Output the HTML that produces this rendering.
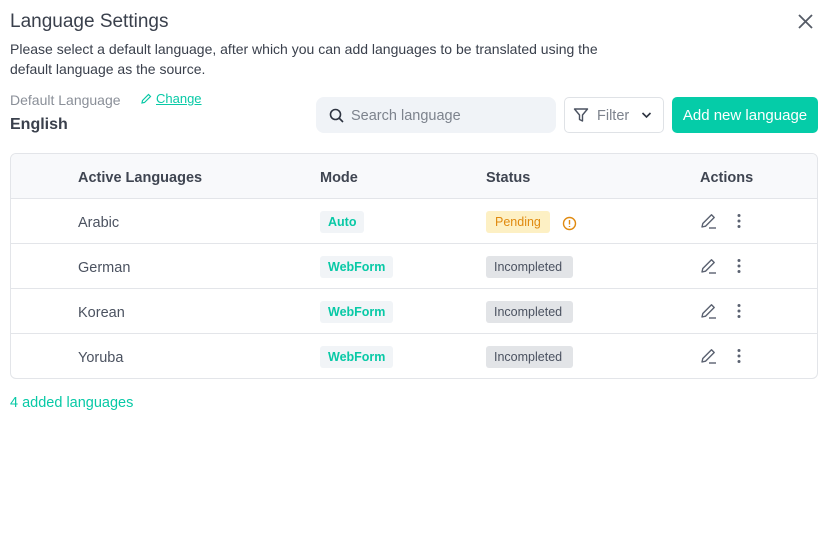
<!DOCTYPE html>
<html><head><style>
*{margin:0;padding:0;box-sizing:border-box}
body{width:827px;height:533px;background:#fff;font-family:"Liberation Sans",sans-serif;position:relative;overflow:hidden;color:#4b5260}
.a{position:absolute}
.tbl{position:absolute;left:10px;top:153px;width:808px;height:226px;border:1px solid #e3e5e9;border-radius:6px;overflow:hidden}
.row{position:absolute;left:0;width:806px;height:45px;border-top:1px solid #e3e5e9}
.row span,.hd span{position:absolute;top:2px;line-height:45px;font-size:14.5px}
.badge{position:absolute;top:12px;height:22px;line-height:22px;font-size:12.5px;padding:0 8px;border-radius:3px}
.wf{background:#f1f4f7;color:#08c9a6;font-weight:bold}
.inc{background:#e2e4e7;color:#4b5260;padding:0 11px 0 8px}
.ic{position:absolute;top:13px}
</style></head><body>
<div class="a" style="left:10px;top:11px;font-size:19px;color:#3a404c">Language Settings</div>
<svg class="a" style="left:797px;top:13px" width="17" height="17" viewBox="0 0 17 17"><path d="M2 2L15 15M15 2L2 15" stroke="#555b66" stroke-width="1.8"/></svg>
<div class="a" style="left:10px;top:39px;font-size:14px;line-height:20px;color:#3a404c;width:625px">Please select a default language, after which you can add languages to be translated using the default language as the source.</div>
<div class="a" style="left:10px;top:92px;font-size:14px;color:#8a8f98">Default Language</div>
<svg class="a" style="left:140px;top:93px" width="12" height="12" viewBox="0 0 12 12"><path d="M2 10L2.5 7.5L8.5 1.5L10.5 3.5L4.5 9.5Z" fill="none" stroke="#08c9a6" stroke-width="1.2"/></svg>
<div class="a" style="left:156px;top:91px;font-size:13px;color:#08c9a6;text-decoration:underline">Change</div>
<div class="a" style="left:10px;top:116px;font-size:16px;font-weight:bold;color:#3a404c">English</div>
<div class="a" style="left:316px;top:97px;width:240px;height:36px;background:#f0f3f7;border-radius:8px"></div>
<svg class="a" style="left:329px;top:108px" width="15" height="15" viewBox="0 0 15 15"><circle cx="6.5" cy="6.5" r="5" fill="none" stroke="#2d3340" stroke-width="1.6"/><path d="M10 10L14 14" stroke="#2d3340" stroke-width="1.6"/></svg>
<div class="a" style="left:351px;top:107px;font-size:14.5px;line-height:18px;color:#7d838d">Search language</div>
<div class="a" style="left:564px;top:97px;width:100px;height:36px;border:1px solid #dfe2e6;border-radius:5px"></div>
<svg class="a" style="left:573px;top:107px" width="16" height="16" viewBox="0 0 16 16"><path d="M1.5 2H14.5L9.5 8V14L6.5 12.5V8Z" fill="none" stroke="#4b5260" stroke-width="1.4" stroke-linejoin="round"/></svg>
<div class="a" style="left:597px;top:107px;font-size:14.5px;line-height:18px;color:#7d838d">Filter</div>
<svg class="a" style="left:641px;top:111px" width="11" height="8" viewBox="0 0 11 8"><path d="M1.5 2L5.5 6L9.5 2" fill="none" stroke="#2d3340" stroke-width="1.6"/></svg>
<div class="a" style="left:672px;top:97px;width:146px;height:36px;background:#05cca8;border-radius:5px;color:#fff;font-size:15px;line-height:38px;text-align:center">Add new language</div>
<div class="tbl">
<div class="hd" style="position:absolute;left:0;top:0;width:806px;height:44px;background:#f8f9fb;font-weight:bold;color:#3f4551">
<span style="left:67px">Active Languages</span><span style="left:309px">Mode</span><span style="left:475px">Status</span><span style="left:689px">Actions</span></div>
<div class="row" style="top:44px"><span style="left:67px">Arabic</span><div class="badge wf" style="left:309px">Auto</div><div class="badge" style="left:475px;background:#fdf0c4;color:#e08a10;padding:0 9px">Pending</div>
<svg class="ic" style="left:551px;top:17px" width="15" height="15" viewBox="0 0 15 15"><circle cx="7.5" cy="7.5" r="6" fill="none" stroke="#e08a10" stroke-width="1.4"/><path d="M7.5 4V8.5M7.5 10V11" stroke="#e08a10" stroke-width="1.4"/></svg></div>
<div class="row" style="top:89px"><span style="left:67px">German</span><div class="badge wf" style="left:309px">WebForm</div><div class="badge inc" style="left:475px">Incompleted</div></div>
<div class="row" style="top:134px"><span style="left:67px">Korean</span><div class="badge wf" style="left:309px">WebForm</div><div class="badge inc" style="left:475px">Incompleted</div></div>
<div class="row" style="top:179px"><span style="left:67px">Yoruba</span><div class="badge wf" style="left:309px">WebForm</div><div class="badge inc" style="left:475px">Incompleted</div></div>
</div>
<div id="acts"></div>
<script>
var h='';[221,266,311,356].forEach(function(y){h+='<svg class="a" style="left:700px;top:'+(y-9)+'px" width="18" height="18" viewBox="0 0 18 18"><path d="M2 15L2.8 11.5L11.5 2.8L14.2 5.5L5.5 14.2Z" fill="none" stroke="#5a6170" stroke-width="1.4" stroke-linejoin="round"/><path d="M9 16H16" stroke="#5a6170" stroke-width="1.4"/></svg><svg class="a" style="left:736px;top:'+(y-8)+'px" width="6" height="16" viewBox="0 0 6 16"><circle cx="3" cy="2.5" r="1.5" fill="#5a6170"/><circle cx="3" cy="8" r="1.5" fill="#5a6170"/><circle cx="3" cy="13.5" r="1.5" fill="#5a6170"/></svg>';});document.getElementById('acts').innerHTML=h;
</script>
<div class="a" style="left:10px;top:395px;font-size:14.5px;color:#08c9a6">4 added languages</div>
</body></html>
